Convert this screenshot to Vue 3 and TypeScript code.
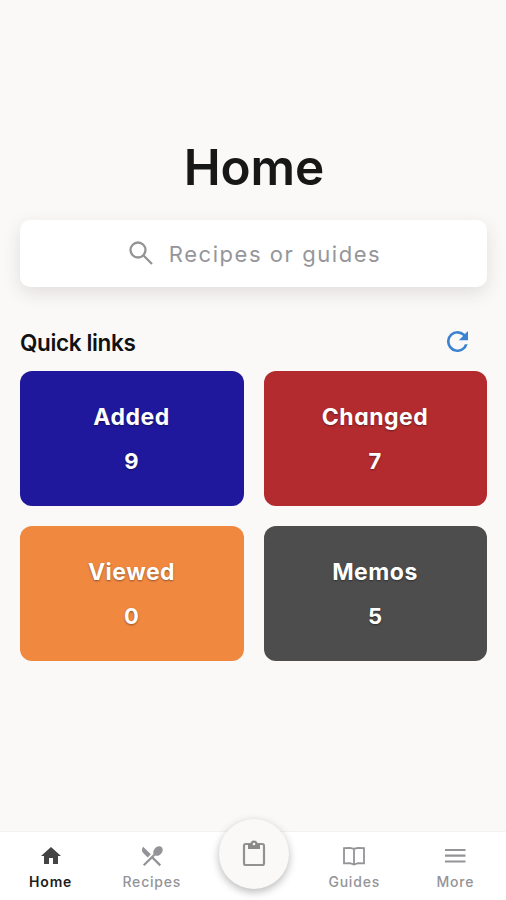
<script setup lang="ts">
interface QuickLink {
  name: string
  count: number
}

const links: QuickLink[] = [
  { name: 'Added', count: 9 },
  { name: 'Changed', count: 7 },
  { name: 'Viewed', count: 0 },
  { name: 'Memos', count: 5 },
]
</script>

<template>
  <div class="screen">
    <main class="content">
      <h1 class="title">Home</h1>

      <div class="search">
        <svg class="search-icon" viewBox="0 0 24 24">
          <circle cx="9" cy="9" r="7.500" />
          <path d="M14.500 14.500L23 23" />
        </svg>
        <span class="search-text">Recipes or guides</span>
      </div>

      <div class="section-head">
        <h2 class="section-title">Quick links</h2>
        <svg class="refresh" viewBox="4 4 16 16">
          <path d="M17.65 6.35A7.96 7.96 0 0 0 12 4a8 8 0 1 0 7.73 10h-2.08A6 6 0 1 1 12 6c1.66 0 3.14.69 4.22 1.78L13 11h7V4l-2.35 2.35z" />
        </svg>
      </div>

      <div class="cards">
        <div v-for="link in links" :key="link.name" class="card" :class="link.name.toLowerCase()">
          <span class="card-name">{{ link.name }}</span>
          <span class="card-count">{{ link.count }}</span>
        </div>
      </div>
    </main>

    <nav class="nav">
      <div class="tab active">
        <svg class="tab-icon" viewBox="0 0 24 24"><path d="M10 20v-6h4v6h5v-8h3L12 3 2 12h3v8z" /></svg>
        <span class="tab-label">Home</span>
      </div>
      <div class="tab">
        <svg class="tab-icon" viewBox="1 1 22 22">
          <path d="M8.1 13.34l2.83-2.83L3.91 3.5a4 4 0 0 0 0 5.66l4.19 4.18zm6.78-1.81c1.53.71 3.68.21 5.27-1.38 1.91-1.91 2.28-4.65.81-6.12-1.46-1.46-4.2-1.1-6.12.81-1.59 1.59-2.09 3.74-1.38 5.27L3.7 19.87l1.41 1.41L12 14.41l6.88 6.88 1.41-1.41L13.41 13l1.47-1.47z" />
        </svg>
        <span class="tab-label">Recipes</span>
      </div>
      <div class="tab center">
        <div class="fab">
          <svg class="fab-icon" viewBox="0 0 24 28">
            <rect class="board" x="2" y="5" width="20" height="21" rx="1.800" />
            <path class="clip" d="M6 5H8.500a3.500 3.500 0 0 1 7 0h2.500v5h-12z" />
            <circle class="hole" cx="12" cy="5" r="1.300" />
          </svg>
        </div>
      </div>
      <div class="tab">
        <svg class="tab-icon line" viewBox="0 0 24 24">
          <path d="M12 4.800L8 3.800L2 4V19.300L8 19.200L12 20.500L16 19.200L22 19.300V4L16 3.800L12 4.800V20.500" />
        </svg>
        <span class="tab-label">Guides</span>
      </div>
      <div class="tab">
        <svg class="tab-icon line menu" viewBox="0 0 24 24"><path d="M2 6H22.500M2 11.700H22.500M2 17.500H22.500" /></svg>
        <span class="tab-label">More</span>
      </div>
    </nav>
  </div>
</template>

<style>
body {
  margin: 0;
  background: #faf9f7;
}
</style>

<style scoped>
.screen {
  display: flex;
  flex-direction: column;
  box-sizing: border-box;
  width: 506px;
  height: 900px;
  overflow: hidden;
  background: #faf9f7;
  color: #171717;
  font-family: Inter, Lato, "Liberation Sans", sans-serif;
  font-feature-settings: "cv11", "ss03";
}
.content {
  flex: 1;
  padding: 136px 19px 0 20px;
}
.title {
  margin: 0;
  padding-left: 1px;
  text-align: center;
  font-size: 49.500px;
  font-weight: 600;
  line-height: 62px;
  letter-spacing: -0.1px;
}
.search {
  display: flex;
  align-items: center;
  justify-content: center;
  gap: 16px;
  box-sizing: border-box;
  height: 67px;
  margin-top: 22px;
  padding-left: 3px;
  border-radius: 10px;
  background: #fff;
  box-shadow: 0 6px 18px rgba(60, 50, 45, 0.13);
}
.search-icon {
  width: 24px;
  height: 24px;
  margin-bottom: 1px;
  fill: none;
  stroke: #949494;
  stroke-width: 2.300;
}
.search-text {
  color: #96969a;
  font-size: 22px;
  line-height: 30px;
  letter-spacing: 1.55px;
}
.section-head {
  display: flex;
  align-items: center;
  justify-content: space-between;
  height: 30px;
  margin-top: 40px;
  padding-right: 19px;
}
.section-title {
  margin: 1px 0 0;
  color: #111;
  font-size: 22.500px;
  font-weight: 600;
  line-height: 30px;
  letter-spacing: -0.35px;
}
.refresh {
  width: 21px;
  height: 21px;
  margin-bottom: 1px;
  fill: #3b82d0;
}
.cards {
  display: grid;
  grid-template-columns: 224px 223px;
  grid-auto-rows: 135px;
  gap: 20px;
  margin-top: 14px;
}
.card {
  display: flex;
  flex-direction: column;
  align-items: center;
  box-sizing: border-box;
  padding-top: 31px;
  border-radius: 12px;
  color: #fff;
  font-size: 23px;
  font-weight: 700;
  line-height: 30px;
  text-shadow: 0 1px 2px rgba(0, 0, 0, 0.4);
}
.card-name {
  padding-right: 1px;
  letter-spacing: 0.5px;
}
.card-count {
  margin-top: 14px;
  padding-right: 1px;
  font-size: 22px;
}
.added { background: #1f189c; }
.changed { background: #b32b2f; }
.viewed { background: #f08840; }
.memos { background: #4d4d4d; }
.nav {
  display: grid;
  grid-template-columns: repeat(5, 1fr);
  box-sizing: border-box;
  height: 69px;
  border-top: 1px solid #f3f2f1;
  background: #fff;
}
.tab {
  display: flex;
  flex-direction: column;
  align-items: center;
  padding-top: 12px;
  color: #949498;
}
.active {
  color: #1c1c1c;
}
.tab-icon {
  width: 24px;
  height: 24px;
  fill: currentColor;
}
.active .tab-icon {
  fill: #444;
}
.line {
  fill: none;
  stroke: currentColor;
  stroke-width: 1.800;
}
.menu {
  stroke-width: 2.200;
}
.tab-label {
  margin-top: 4px;
  font-size: 14px;
  font-weight: 500;
  line-height: 20px;
  letter-spacing: 0.8px;
}
.active .tab-label {
  font-weight: 600;
}
.center {
  padding-top: 0;
}
.fab {
  display: flex;
  align-items: center;
  justify-content: center;
  flex-shrink: 0;
  width: 70px;
  height: 70px;
  margin-top: -13px;
  margin-left: 2px;
  border-radius: 50%;
  background: #faf9f8;
  box-shadow: 0 3px 8px rgba(0, 0, 0, 0.28);
}
.fab-icon {
  width: 24px;
  height: 28px;
  margin-bottom: 2px;
}
.board {
  fill: none;
  stroke: #929292;
  stroke-width: 2.200;
}
.clip {
  fill: #8a8a8a;
}
.hole {
  fill: #faf9f8;
}
</style>
